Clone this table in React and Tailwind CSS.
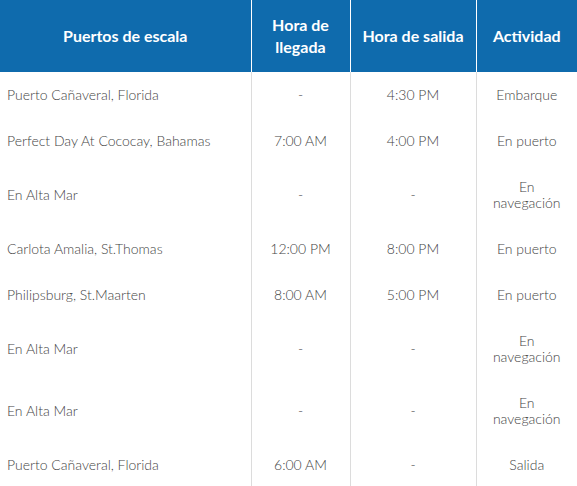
import React from "react";

const rows = [
  ["Puerto Cañaveral, Florida", "-", "4:30 PM", "Embarque"],
  ["Perfect Day At Cococay, Bahamas", "7:00 AM", "4:00 PM", "En puerto"],
  ["En Alta Mar", "-", "-", "En navegación"],
  ["Carlota Amalia, St.Thomas", "12:00 PM", "8:00 PM", "En puerto"],
  ["Philipsburg, St.Maarten", "8:00 AM", "5:00 PM", "En puerto"],
  ["En Alta Mar", "-", "-", "En navegación"],
  ["En Alta Mar", "-", "-", "En navegación"],
  ["Puerto Cañaveral, Florida", "6:00 AM", "-", "Salida"],
];

export default function App() {
  return (
    <div className="w-[577px] bg-white" style={{ fontFamily: "Lato, 'Noto Sans', sans-serif" }}>
      <table className="w-[577px] table-fixed border-collapse">
        <colgroup>
          <col className="w-[251px]" />
          <col className="w-[99px]" />
          <col className="w-[126px]" />
          <col className="w-[101px]" />
        </colgroup>
        <thead>
          <tr className="bg-[#0f6bad] text-white text-[16px] font-bold leading-[22px]">
            <th className="h-[72px] px-[8px] py-[13px] text-center font-bold">Puertos de escala</th>
            <th className="h-[72px] px-[8px] py-[13px] text-center font-bold border-l border-white">Hora de llegada</th>
            <th className="h-[72px] px-[8px] py-[13px] text-center font-bold border-l border-white">Hora de salida</th>
            <th className="h-[72px] px-[8px] py-[13px] text-center font-bold border-l border-white">Actividad</th>
          </tr>
        </thead>
        <tbody className="text-[14px] leading-[16px] font-light text-[#444444]">
          {rows.map((r, i) => (
            <tr key={i}>
              <td className="pl-[7px] pr-[8px] py-[15px] text-left align-middle">{r[0]}</td>
              <td className="px-[8px] py-[15px] text-center align-middle border-l border-[#dcdcdc]">{r[1]}</td>
              <td className="px-[8px] py-[15px] text-center align-middle border-l border-[#dcdcdc]">{r[2]}</td>
              <td className="px-[10px] py-[15px] text-center align-middle border-l border-[#dcdcdc]">{r[3]}</td>
            </tr>
          ))}
        </tbody>
      </table>
    </div>
  );
}
